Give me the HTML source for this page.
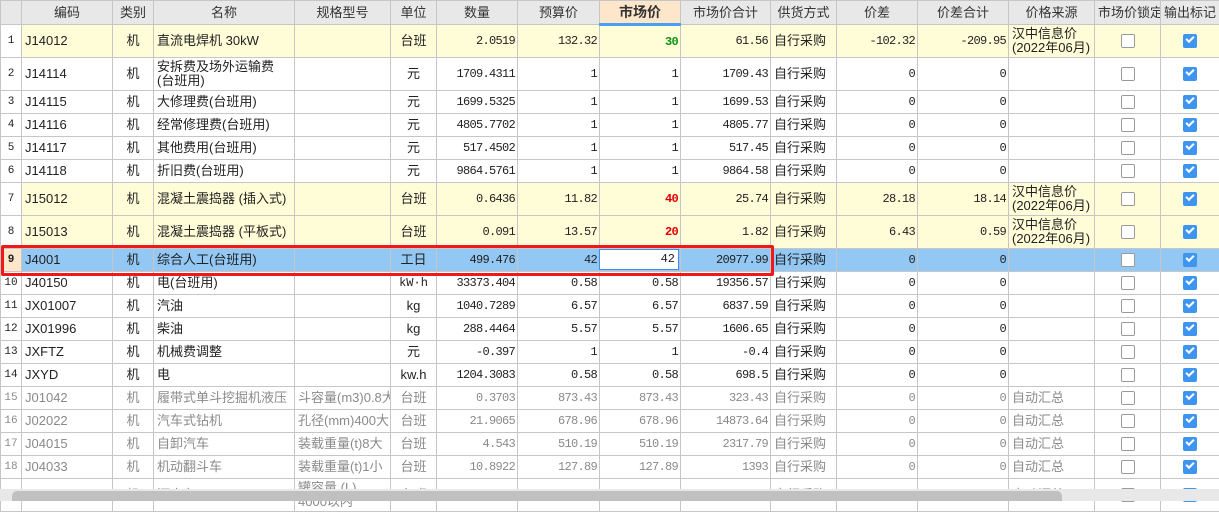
<!DOCTYPE html>
<html><head><meta charset="utf-8"><style>
body{margin:0;width:1219px;height:501px;overflow:hidden;background:#fff;font-family:"Liberation Sans","Noto Sans CJK SC",sans-serif;font-size:13px;color:#222;position:relative}
table{border-collapse:collapse;table-layout:fixed;position:absolute;left:0;top:0;width:1219px}
td,th{border:1px solid #c6c6c6;padding:0 3px;overflow:hidden;white-space:nowrap;line-height:14px;box-sizing:border-box}
th{background:#e8e8e8;font-weight:normal;height:24px;color:#333;font-size:13px}
th.mk{background:#fde6c9;font-weight:bold;border-bottom:3px solid #4a9ff0;font-size:14px}
td.n{font-family:"Liberation Mono",monospace;font-size:12px;letter-spacing:-0.7px;text-align:right;padding-right:2px}
td.c{text-align:center}
td.rn{text-align:center;padding:0;font-family:"Liberation Mono",monospace;font-size:11px}
tr.y td{background:#fffcd8}
tr.y td.rn{background:#fff}
tr.s td{background:#93c7f4}
tr.s td.rn{background:#fde6c9;font-weight:bold}
tr.g td{color:#8a8a8a}
td.w{white-space:normal;line-height:14px}
.cb{display:inline-block;width:12px;height:12px;border:1px solid #9a9a9a;border-radius:2px;background:#fff;vertical-align:middle}
.ck{display:inline-block;width:14px;height:14px;border-radius:2px;background:#3d95f0;vertical-align:middle;position:relative}
.ck:after{content:"";position:absolute;left:3px;top:2px;width:6px;height:3px;border-left:2px solid #fff;border-bottom:2px solid #fff;transform:rotate(-45deg)}
.red{color:#e00000;font-weight:bold;font-size:12px}
.grn{color:#109010;font-weight:bold;font-size:12px}
.box{position:absolute;left:1px;top:245px;width:767px;height:25px;border:3px solid #f01818;border-radius:2px}
.edit{position:absolute;left:599px;top:249px;width:80px;height:21px;border:1px solid #3c8ff0;background:#fff;font-family:"Liberation Mono",monospace;font-size:12px;text-align:right;line-height:19px;box-sizing:border-box;padding-right:3px}
.sb{position:absolute;left:0;top:489px;width:1219px;height:12px;background:#e8e8e8}
.th{position:absolute;left:12px;top:491px;width:1050px;height:10px;background:#c0c0c0;border-radius:5px 5px 0 0}
tr.h1 td{height:23px}
tr.h2 td{height:33px}
</style></head><body>
<table>
<colgroup><col style="width:21px"><col style="width:91px"><col style="width:41px"><col style="width:141px"><col style="width:96px"><col style="width:46px"><col style="width:81px"><col style="width:82px"><col style="width:81px"><col style="width:90px"><col style="width:66px"><col style="width:81px"><col style="width:91px"><col style="width:86px"><col style="width:66px"><col style="width:59px"></colgroup>
<tr><th></th><th>编码</th><th>类别</th><th>名称</th><th>规格型号</th><th>单位</th><th>数量</th><th>预算价</th><th class="mk">市场价</th><th>市场价合计</th><th>供货方式</th><th>价差</th><th>价差合计</th><th>价格来源</th><th>市场价锁定</th><th>输出标记</th></tr>
<tr class="y h2"><td class="rn">1</td><td>J14012</td><td class="c">机</td><td>直流电焊机 30kW</td><td></td><td class="c">台班</td><td class="n">2.0519</td><td class="n">132.32</td><td class="n"><span class="grn">30</span></td><td class="n">61.56</td><td>自行采购</td><td class="n">-102.32</td><td class="n">-209.95</td><td class="w">汉中信息价<br>(2022年06月)</td><td class="c"><span class="cb"></span></td><td class="c"><span class="ck"></span></td></tr>
<tr class="h2"><td class="rn">2</td><td>J14114</td><td class="c">机</td><td class="w">安拆费及场外运输费(台班用)</td><td></td><td class="c">元</td><td class="n">1709.4311</td><td class="n">1</td><td class="n">1</td><td class="n">1709.43</td><td>自行采购</td><td class="n">0</td><td class="n">0</td><td></td><td class="c"><span class="cb"></span></td><td class="c"><span class="ck"></span></td></tr>
<tr class="h1"><td class="rn">3</td><td>J14115</td><td class="c">机</td><td>大修理费(台班用)</td><td></td><td class="c">元</td><td class="n">1699.5325</td><td class="n">1</td><td class="n">1</td><td class="n">1699.53</td><td>自行采购</td><td class="n">0</td><td class="n">0</td><td></td><td class="c"><span class="cb"></span></td><td class="c"><span class="ck"></span></td></tr>
<tr class="h1"><td class="rn">4</td><td>J14116</td><td class="c">机</td><td>经常修理费(台班用)</td><td></td><td class="c">元</td><td class="n">4805.7702</td><td class="n">1</td><td class="n">1</td><td class="n">4805.77</td><td>自行采购</td><td class="n">0</td><td class="n">0</td><td></td><td class="c"><span class="cb"></span></td><td class="c"><span class="ck"></span></td></tr>
<tr class="h1"><td class="rn">5</td><td>J14117</td><td class="c">机</td><td>其他费用(台班用)</td><td></td><td class="c">元</td><td class="n">517.4502</td><td class="n">1</td><td class="n">1</td><td class="n">517.45</td><td>自行采购</td><td class="n">0</td><td class="n">0</td><td></td><td class="c"><span class="cb"></span></td><td class="c"><span class="ck"></span></td></tr>
<tr class="h1"><td class="rn">6</td><td>J14118</td><td class="c">机</td><td>折旧费(台班用)</td><td></td><td class="c">元</td><td class="n">9864.5761</td><td class="n">1</td><td class="n">1</td><td class="n">9864.58</td><td>自行采购</td><td class="n">0</td><td class="n">0</td><td></td><td class="c"><span class="cb"></span></td><td class="c"><span class="ck"></span></td></tr>
<tr class="y h2"><td class="rn">7</td><td>J15012</td><td class="c">机</td><td>混凝土震捣器 (插入式)</td><td></td><td class="c">台班</td><td class="n">0.6436</td><td class="n">11.82</td><td class="n"><span class="red">40</span></td><td class="n">25.74</td><td>自行采购</td><td class="n">28.18</td><td class="n">18.14</td><td class="w">汉中信息价<br>(2022年06月)</td><td class="c"><span class="cb"></span></td><td class="c"><span class="ck"></span></td></tr>
<tr class="y h2"><td class="rn">8</td><td>J15013</td><td class="c">机</td><td>混凝土震捣器 (平板式)</td><td></td><td class="c">台班</td><td class="n">0.091</td><td class="n">13.57</td><td class="n"><span class="red">20</span></td><td class="n">1.82</td><td>自行采购</td><td class="n">6.43</td><td class="n">0.59</td><td class="w">汉中信息价<br>(2022年06月)</td><td class="c"><span class="cb"></span></td><td class="c"><span class="ck"></span></td></tr>
<tr class="s h1"><td class="rn">9</td><td>J4001</td><td class="c">机</td><td>综合人工(台班用)</td><td></td><td class="c">工日</td><td class="n">499.476</td><td class="n">42</td><td class="n">42</td><td class="n">20977.99</td><td>自行采购</td><td class="n">0</td><td class="n">0</td><td></td><td class="c"><span class="cb"></span></td><td class="c"><span class="ck"></span></td></tr>
<tr class="h1"><td class="rn">10</td><td>J40150</td><td class="c">机</td><td>电(台班用)</td><td></td><td class="c" style="font-family:'Liberation Mono',monospace;font-size:12px">kW·h</td><td class="n">33373.404</td><td class="n">0.58</td><td class="n">0.58</td><td class="n">19356.57</td><td>自行采购</td><td class="n">0</td><td class="n">0</td><td></td><td class="c"><span class="cb"></span></td><td class="c"><span class="ck"></span></td></tr>
<tr class="h1"><td class="rn">11</td><td>JX01007</td><td class="c">机</td><td>汽油</td><td></td><td class="c">kg</td><td class="n">1040.7289</td><td class="n">6.57</td><td class="n">6.57</td><td class="n">6837.59</td><td>自行采购</td><td class="n">0</td><td class="n">0</td><td></td><td class="c"><span class="cb"></span></td><td class="c"><span class="ck"></span></td></tr>
<tr class="h1"><td class="rn">12</td><td>JX01996</td><td class="c">机</td><td>柴油</td><td></td><td class="c">kg</td><td class="n">288.4464</td><td class="n">5.57</td><td class="n">5.57</td><td class="n">1606.65</td><td>自行采购</td><td class="n">0</td><td class="n">0</td><td></td><td class="c"><span class="cb"></span></td><td class="c"><span class="ck"></span></td></tr>
<tr class="h1"><td class="rn">13</td><td>JXFTZ</td><td class="c">机</td><td>机械费调整</td><td></td><td class="c">元</td><td class="n">-0.397</td><td class="n">1</td><td class="n">1</td><td class="n">-0.4</td><td>自行采购</td><td class="n">0</td><td class="n">0</td><td></td><td class="c"><span class="cb"></span></td><td class="c"><span class="ck"></span></td></tr>
<tr class="h1"><td class="rn">14</td><td>JXYD</td><td class="c">机</td><td>电</td><td></td><td class="c">kw.h</td><td class="n">1204.3083</td><td class="n">0.58</td><td class="n">0.58</td><td class="n">698.5</td><td>自行采购</td><td class="n">0</td><td class="n">0</td><td></td><td class="c"><span class="cb"></span></td><td class="c"><span class="ck"></span></td></tr>
<tr class="g h1"><td class="rn">15</td><td>J01042</td><td class="c">机</td><td>履带式单斗挖掘机液压</td><td>斗容量(m3)0.8大</td><td class="c">台班</td><td class="n">0.3703</td><td class="n">873.43</td><td class="n">873.43</td><td class="n">323.43</td><td>自行采购</td><td class="n">0</td><td class="n">0</td><td>自动汇总</td><td class="c"><span class="cb"></span></td><td class="c"><span class="ck"></span></td></tr>
<tr class="g h1"><td class="rn">16</td><td>J02022</td><td class="c">机</td><td>汽车式钻机</td><td>孔径(mm)400大</td><td class="c">台班</td><td class="n">21.9065</td><td class="n">678.96</td><td class="n">678.96</td><td class="n">14873.64</td><td>自行采购</td><td class="n">0</td><td class="n">0</td><td>自动汇总</td><td class="c"><span class="cb"></span></td><td class="c"><span class="ck"></span></td></tr>
<tr class="g h1"><td class="rn">17</td><td>J04015</td><td class="c">机</td><td>自卸汽车</td><td>装载重量(t)8大</td><td class="c">台班</td><td class="n">4.543</td><td class="n">510.19</td><td class="n">510.19</td><td class="n">2317.79</td><td>自行采购</td><td class="n">0</td><td class="n">0</td><td>自动汇总</td><td class="c"><span class="cb"></span></td><td class="c"><span class="ck"></span></td></tr>
<tr class="g h1"><td class="rn">18</td><td>J04033</td><td class="c">机</td><td>机动翻斗车</td><td>装载重量(t)1小</td><td class="c">台班</td><td class="n">10.8922</td><td class="n">127.89</td><td class="n">127.89</td><td class="n">1393</td><td>自行采购</td><td class="n">0</td><td class="n">0</td><td>自动汇总</td><td class="c"><span class="cb"></span></td><td class="c"><span class="ck"></span></td></tr>
<tr class="g h2"><td class="rn">19</td><td>J05005</td><td class="c">机</td><td>洒水车</td><td class="w">罐容量 (L) 4000以内</td><td class="c">台班</td><td class="n">0.2520</td><td class="n">486.3</td><td class="n">486.3</td><td class="n">94.54</td><td>自行采购</td><td class="n">0</td><td class="n">0</td><td>自动汇总</td><td class="c"><span class="cb"></span></td><td class="c"><span class="ck"></span></td></tr>
</table>
<div class="edit">42</div>
<div class="box"></div>
<div class="sb"></div><div class="th"></div>
</body></html>
